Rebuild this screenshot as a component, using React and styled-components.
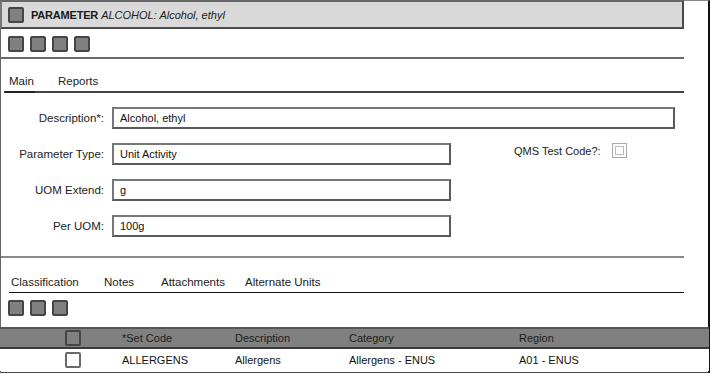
import React from 'react';
import styled, { createGlobalStyle } from 'styled-components';

const GlobalStyle = createGlobalStyle`
  body {
    margin: 0;
    background: #fff;
    font-family: "Liberation Sans", Arial, sans-serif;
    color: #1a1a1a;
  }
`;

const Frame = styled.div`
  box-sizing: border-box;
  width: 710px;
  height: 373px;
  border-top: 1px solid #8a8a8a;
  border-left: 1px solid #666;
  border-right: 2px solid #111;
  border-bottom: 1px solid #444;
  display: flex;
  flex-direction: column;
`;

const Column = styled.div`
  width: 683px;
  display: flex;
  flex-direction: column;
`;

const Header = styled.div`
  box-sizing: border-box;
  height: 29px;
  margin-top: -1px;
  margin-left: -1px;
  background: #d9d9d9;
  border: 2px solid #4a4a4a;
  border-top-color: #666;
  border-left-color: #777;
  display: flex;
  align-items: center;
  padding-left: 6px;
  gap: 7px;
  font-size: 11px;
`;

const Title = styled.span`
  b {
    font-weight: bold;
    letter-spacing: -0.2px;
  }
  i {
    font-style: italic;
  }
`;

const Square = styled.span`
  box-sizing: border-box;
  display: inline-block;
  width: 16px;
  height: 16px;
  background: ${(p) => (p.light ? '#fff' : '#808080')};
  border: 2px solid;
  border-color: ${(p) => (p.light ? '#6a6a6a' : '#454545')};
  border-radius: 2px;
`;

const Toolbar = styled.div`
  display: flex;
  gap: 6px;
  padding: 7px 0 0 7px;
  height: 16px;
`;

const Rule = styled.div`
  height: ${(p) => p.thick || 2}px;
  background: ${(p) => p.color || '#666'};
  margin-left: ${(p) => p.indent || 0}px;
  margin-top: ${(p) => p.top || 0}px;
`;

const Tabs = styled.div`
  display: flex;
  align-items: flex-end;
  height: ${(p) => p.h}px;
  padding-left: ${(p) => p.left || 7}px;
  font-size: 11.5px;
  color: #222;
`;

const Tab = styled.span`
  width: ${(p) => (p.w ? `${p.w}px` : 'auto')};
  padding-bottom: 4px;
  position: relative;
  white-space: nowrap;
`;

const ActiveMark = styled.span`
  position: absolute;
  left: -4px;
  width: 30px;
  bottom: -2px;
  height: 2px;
  background: #222;
`;

const Form = styled.div`
  display: flex;
  flex-direction: column;
  gap: 14px;
  padding-top: 14px;
  height: 149px;
`;

const Row = styled.div`
  display: flex;
  align-items: center;
  height: 22px;
`;

const Label = styled.label`
  width: 103px;
  text-align: right;
  font-size: 11.5px;
  color: #222;
  margin-right: 8px;
`;

const Field = styled.div`
  box-sizing: border-box;
  width: ${(p) => p.w}px;
  height: 22px;
  border: 2px solid #5a5a5a;
  border-top-color: #777;
  border-left-color: #777;
  padding: 0 6px;
  display: flex;
  align-items: center;
  font-size: 11px;
  color: #111;
`;

const CheckGroup = styled.div`
  display: flex;
  align-items: center;
  margin-left: 63px;
  margin-top: -7px;
  gap: 11px;
  font-size: 11px;
  color: #222;
`;

const CheckBox = styled.span`
  box-sizing: border-box;
  width: 15px;
  height: 15px;
  border: 1px solid #aaa;
  padding: 2px;
  display: inline-flex;
  span {
    flex: 1;
    border: 1px solid #bbb;
  }
`;

const Table = styled.div`
  margin-top: 11px;
  margin-right: -1px;
  margin-left: -1px;
  font-size: 11px;
`;

const TableRow = styled.div`
  box-sizing: border-box;
  display: grid;
  grid-template-columns: 122px 113px 114px 170px 1fr;
  align-items: center;
  height: 22px;
  background: ${(p) => (p.head ? '#808080' : '#fff')};
  color: ${(p) => (p.head ? '#1c1c1c' : '#111')};
  border-top: ${(p) => (p.head ? '2px solid #555' : 'none')};
  border-bottom: ${(p) => (p.head ? '2px solid #3a3a3a' : 'none')};
`;

const Cell = styled.span`
  display: flex;
  align-items: center;
  white-space: nowrap;
`;

const SelectCell = styled(Cell)`
  padding-left: 65px;
`;

const tools = (n) => Array.from({ length: n }, (_, i) => <Square key={i} />);

export default function App() {
  return (
    <>
      <GlobalStyle />
      <Frame>
        <Column>
          <Header>
            <Square />
            <Title>
              <b>PARAMETER</b> <i>ALCOHOL: Alcohol, ethyl</i>
            </Title>
          </Header>
          <Toolbar>{tools(4)}</Toolbar>
          <Rule top={5} color="#6a6a6a" />
          <Tabs h={32} left={8}>
            <Tab w={49}>
              Main
              <ActiveMark />
            </Tab>
            <Tab>Reports</Tab>
          </Tabs>
          <Rule indent={3} color="#444" />
          <Form>
            <Row>
              <Label>Description*:</Label>
              <Field w={563}>Alcohol, ethyl</Field>
            </Row>
            <Row>
              <Label>Parameter Type:</Label>
              <Field w={339}>Unit Activity</Field>
              <CheckGroup>
                QMS Test Code?:
                <CheckBox>
                  <span />
                </CheckBox>
              </CheckGroup>
            </Row>
            <Row>
              <Label>UOM Extend:</Label>
              <Field w={339}>g</Field>
            </Row>
            <Row>
              <Label>Per UOM:</Label>
              <Field w={339}>100g</Field>
            </Row>
          </Form>
          <Rule color="#8a8a8a" />
          <Tabs h={34} left={10}>
            <Tab w={93}>Classification</Tab>
            <Tab w={57}>Notes</Tab>
            <Tab w={84}>Attachments</Tab>
            <Tab>Alternate Units</Tab>
          </Tabs>
          <Rule indent={8} thick={1} color="#111" />
          <Toolbar>{tools(3)}</Toolbar>
        </Column>
        <Table>
          <TableRow head>
            <SelectCell>
              <Square />
            </SelectCell>
            <Cell>*Set Code</Cell>
            <Cell>Description</Cell>
            <Cell>Category</Cell>
            <Cell>Region</Cell>
          </TableRow>
          <TableRow>
            <SelectCell>
              <Square light />
            </SelectCell>
            <Cell>ALLERGENS</Cell>
            <Cell>Allergens</Cell>
            <Cell>Allergens - ENUS</Cell>
            <Cell>A01 - ENUS</Cell>
          </TableRow>
        </Table>
      </Frame>
    </>
  );
}
